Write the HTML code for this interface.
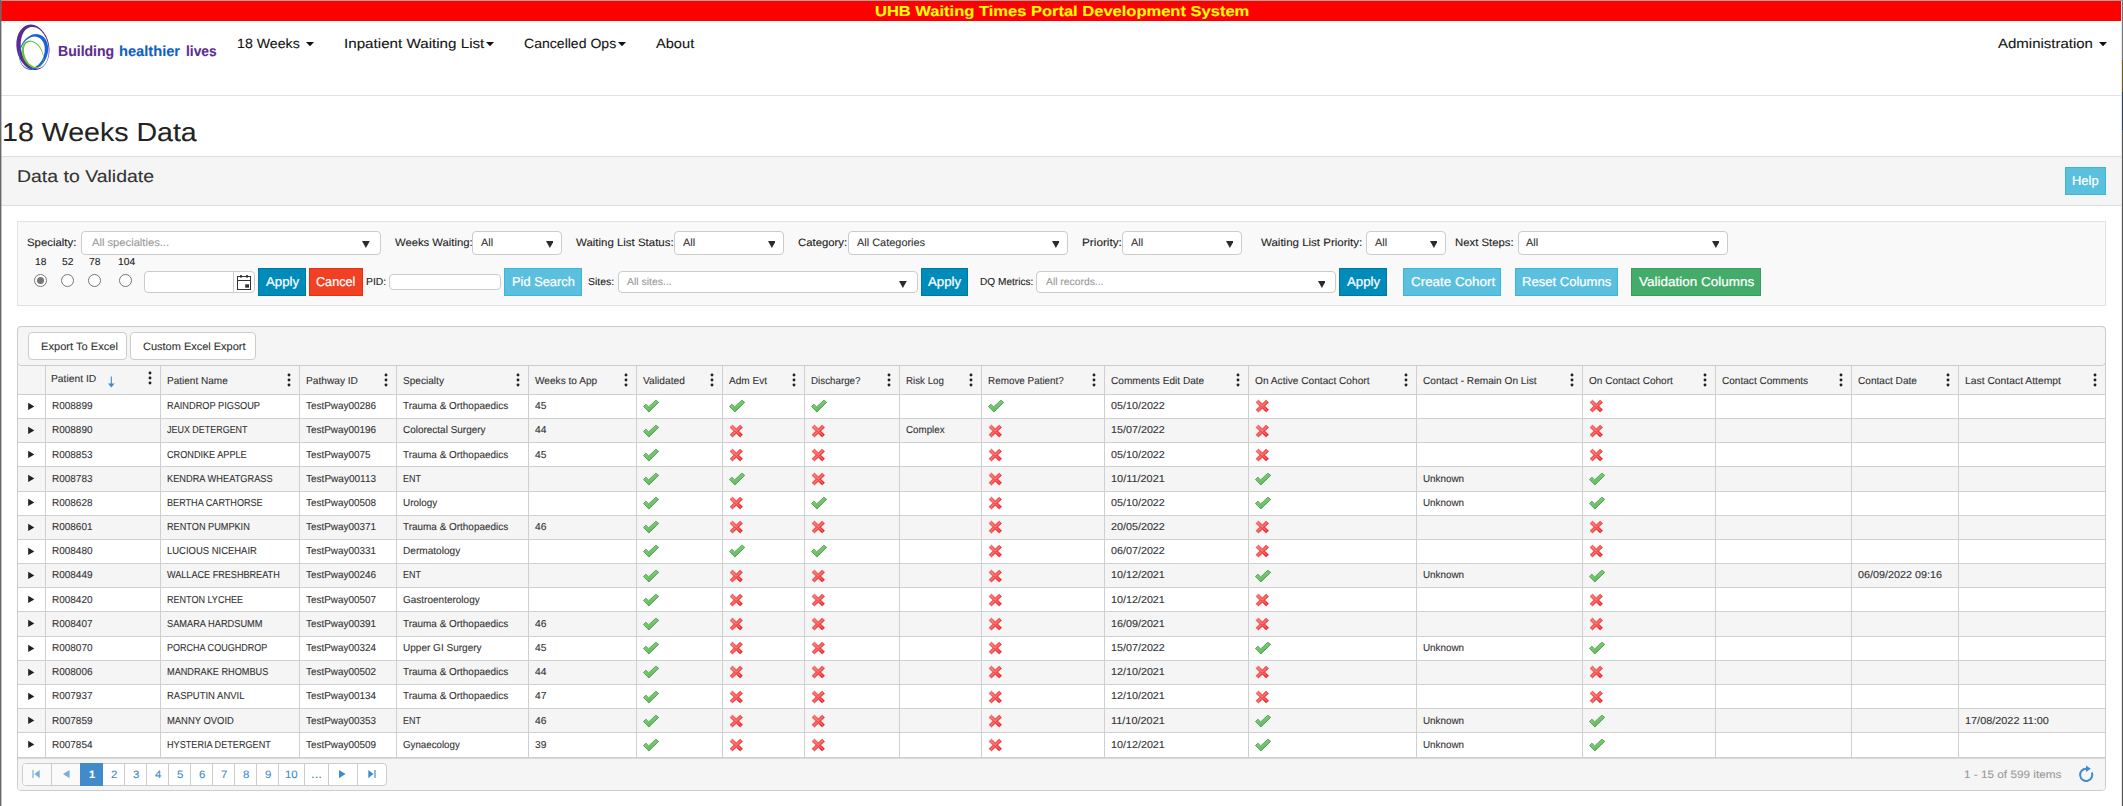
<!DOCTYPE html>
<html><head><meta charset="utf-8"><title>18 Weeks Data</title>
<style>
html,body{margin:0;padding:0;}
body{width:2123px;height:806px;position:relative;overflow:hidden;background:#fff;font-family:"Liberation Sans",sans-serif;}
.b{position:absolute;display:block;}
.t{position:absolute;white-space:pre;line-height:0;transform-origin:0 0;display:block;text-rendering:geometricPrecision;-webkit-text-stroke:0.1px currentColor;}
</style></head><body>
<div class="b" style="left:0px;top:0px;width:2123px;height:806px;background:#fff;"></div>
<div class="b" style="left:1px;top:1px;width:2120px;height:20px;background:#fe0000;"></div>
<span class="t" style="left:874.80px;top:12px;font-size:14.42px;color:#ffff00;font-weight:bold;transform:scaleX(1.1458);">UHB Waiting Times Portal Development System</span>
<div class="b" style="left:1px;top:95px;width:2120px;height:1px;background:#e2e2e2;"></div>
<svg class="b" style="left:10px;top:20px" width="50" height="56" viewBox="10 20 50 56"><path transform="rotate(-11 32.9 47.3)" fill-rule="evenodd" fill="#5a2b90" d="M16.60 47.30a16.30 22.90 0 1 0 32.60 0a16.30 22.90 0 1 0 -32.60 0ZM20.90 48.00a13.70 21.00 0 1 0 27.40 0a13.70 21.00 0 1 0 -27.40 0Z"/><path transform="rotate(20 33.6 52.0)" fill-rule="evenodd" fill="#1762d6" d="M19.60 52.00a14.00 18.40 0 1 0 28.00 0a14.00 18.40 0 1 0 -28.00 0ZM20.50 53.00a12.00 16.40 0 1 0 24.00 0a12.00 16.40 0 1 0 -24.00 0Z"/><path transform="rotate(-25 32.7 54.4)" fill-rule="evenodd" fill="#69c63a" d="M22.50 54.40a10.20 14.40 0 1 0 20.40 0a10.20 14.40 0 1 0 -20.40 0ZM24.70 54.80a8.70 13.30 0 1 0 17.40 0a8.70 13.30 0 1 0 -17.40 0Z"/></svg>
<span class="t" style="left:57.50px;top:52px;font-size:14.6px;color:#5b2c8f;font-weight:bold;transform:scaleX(0.9626);">Building</span>
<span class="t" style="left:119.40px;top:52px;font-size:14.6px;color:#0f5fc6;font-weight:bold;transform:scaleX(1.0041);">healthier</span>
<span class="t" style="left:185.60px;top:52px;font-size:14.6px;color:#5b2c8f;font-weight:bold;transform:scaleX(0.9454);">lives</span>
<span class="t" style="left:236.60px;top:44px;font-size:13.39px;color:#141414;transform:scaleX(1.0591);">18 Weeks</span>
<svg class="b" style="left:306.0px;top:41.8px" width="8.0" height="4.3" viewBox="0 0 8.0 4.3"><path d="M0 0H8.0L4.0 4.3Z" fill="#111"/></svg>
<span class="t" style="left:344.40px;top:44px;font-size:13.39px;color:#141414;transform:scaleX(1.1348);">Inpatient Waiting List</span>
<svg class="b" style="left:485.9px;top:41.8px" width="8.0" height="4.3" viewBox="0 0 8.0 4.3"><path d="M0 0H8.0L4.0 4.3Z" fill="#111"/></svg>
<span class="t" style="left:524.30px;top:44px;font-size:13.39px;color:#141414;transform:scaleX(1.0508);">Cancelled Ops</span>
<svg class="b" style="left:617.6px;top:41.8px" width="8.0" height="4.3" viewBox="0 0 8.0 4.3"><path d="M0 0H8.0L4.0 4.3Z" fill="#111"/></svg>
<span class="t" style="left:655.70px;top:44px;font-size:13.39px;color:#141414;transform:scaleX(1.0926);">About</span>
<span class="t" style="left:1998.00px;top:44px;font-size:13.39px;color:#141414;transform:scaleX(1.1204);">Administration</span>
<svg class="b" style="left:2098.9px;top:41.8px" width="8.0" height="4.3" viewBox="0 0 8.0 4.3"><path d="M0 0H8.0L4.0 4.3Z" fill="#111"/></svg>
<span class="t" style="left:1.60px;top:132px;font-size:26px;color:#222;transform:scaleX(1.0983);">18 Weeks Data</span>
<div class="b" style="left:1px;top:156px;width:2120px;height:1px;background:#ddd;"></div>
<div class="b" style="left:1px;top:157px;width:2120px;height:48px;background:#f5f5f5;"></div>
<div class="b" style="left:1px;top:205px;width:2120px;height:1px;background:#ddd;"></div>
<span class="t" style="left:17.10px;top:177px;font-size:17.0px;color:#333;transform:scaleX(1.1445);">Data to Validate</span>
<div class="b" style="left:2065px;top:167px;width:41px;height:28px;background:#5bc0de;border:1px solid #3db5d8;box-sizing:border-box;"></div>
<span class="t" style="left:2072.40px;top:181px;font-size:12.9px;color:#fff;transform:scaleX(1.0026);-webkit-text-stroke:0.22px #fff;">Help</span>
<div class="b" style="left:17px;top:221px;width:2089px;height:85px;background:#f9f9f9;border:1px solid #e3e3e3;box-sizing:border-box;"></div>
<span class="t" style="left:27.10px;top:243px;font-size:10.7px;color:#222;transform:scaleX(1.0644);">Specialty:</span>
<div class="b" style="left:81px;top:231px;width:300px;height:24px;background:#fff;border:1px solid #ccc;border-radius:4px;box-sizing:border-box;"></div>
<svg class="b" style="left:362.2px;top:241.0px" width="7.8" height="7" viewBox="0 0 7.8 7"><path d="M0 0H7.8L3.9 7Z" fill="#2b2b2b"/></svg>
<span class="t" style="left:91.60px;top:243px;font-size:10.7px;color:#999;transform:scaleX(1.0460);">All specialties...</span>
<span class="t" style="left:394.60px;top:243px;font-size:10.7px;color:#222;transform:scaleX(1.0537);">Weeks Waiting:</span>
<div class="b" style="left:472px;top:231px;width:90px;height:24px;background:#fff;border:1px solid #ccc;border-radius:4px;box-sizing:border-box;"></div>
<svg class="b" style="left:545.5px;top:241.0px" width="7.8" height="7" viewBox="0 0 7.8 7"><path d="M0 0H7.8L3.9 7Z" fill="#2b2b2b"/></svg>
<span class="t" style="left:480.80px;top:243px;font-size:10.7px;color:#333;transform:scaleX(1.0205);">All</span>
<span class="t" style="left:575.90px;top:243px;font-size:10.7px;color:#222;transform:scaleX(1.0715);">Waiting List Status:</span>
<div class="b" style="left:674px;top:231px;width:110px;height:24px;background:#fff;border:1px solid #ccc;border-radius:4px;box-sizing:border-box;"></div>
<svg class="b" style="left:767.5px;top:241.0px" width="7.8" height="7" viewBox="0 0 7.8 7"><path d="M0 0H7.8L3.9 7Z" fill="#2b2b2b"/></svg>
<span class="t" style="left:683.30px;top:243px;font-size:10.7px;color:#333;transform:scaleX(1.0205);">All</span>
<span class="t" style="left:797.90px;top:243px;font-size:10.7px;color:#222;transform:scaleX(1.0600);">Category:</span>
<div class="b" style="left:848px;top:231px;width:220px;height:24px;background:#fff;border:1px solid #ccc;border-radius:4px;box-sizing:border-box;"></div>
<svg class="b" style="left:1051.5px;top:241.0px" width="7.8" height="7" viewBox="0 0 7.8 7"><path d="M0 0H7.8L3.9 7Z" fill="#2b2b2b"/></svg>
<span class="t" style="left:857.00px;top:243px;font-size:10.7px;color:#333;transform:scaleX(1.0235);">All Categories</span>
<span class="t" style="left:1081.50px;top:243px;font-size:10.7px;color:#222;transform:scaleX(1.1006);">Priority:</span>
<div class="b" style="left:1122px;top:231px;width:120px;height:24px;background:#fff;border:1px solid #ccc;border-radius:4px;box-sizing:border-box;"></div>
<svg class="b" style="left:1225.5px;top:241.0px" width="7.8" height="7" viewBox="0 0 7.8 7"><path d="M0 0H7.8L3.9 7Z" fill="#2b2b2b"/></svg>
<span class="t" style="left:1130.90px;top:243px;font-size:10.7px;color:#333;transform:scaleX(1.0205);">All</span>
<span class="t" style="left:1260.90px;top:243px;font-size:10.7px;color:#222;transform:scaleX(1.0766);">Waiting List Priority:</span>
<div class="b" style="left:1366px;top:231px;width:80px;height:24px;background:#fff;border:1px solid #ccc;border-radius:4px;box-sizing:border-box;"></div>
<svg class="b" style="left:1429.5px;top:241.0px" width="7.8" height="7" viewBox="0 0 7.8 7"><path d="M0 0H7.8L3.9 7Z" fill="#2b2b2b"/></svg>
<span class="t" style="left:1375.20px;top:243px;font-size:10.7px;color:#333;transform:scaleX(1.0205);">All</span>
<span class="t" style="left:1454.80px;top:243px;font-size:10.7px;color:#222;transform:scaleX(1.0604);">Next Steps:</span>
<div class="b" style="left:1518px;top:231px;width:210px;height:24px;background:#fff;border:1px solid #ccc;border-radius:4px;box-sizing:border-box;"></div>
<svg class="b" style="left:1711.5px;top:241.0px" width="7.8" height="7" viewBox="0 0 7.8 7"><path d="M0 0H7.8L3.9 7Z" fill="#2b2b2b"/></svg>
<span class="t" style="left:1526.40px;top:243px;font-size:10.7px;color:#333;transform:scaleX(1.0205);">All</span>
<span class="t" style="left:35.30px;top:263px;font-size:10.15px;color:#222;transform:scaleX(1.0140);">18</span>
<div class="b" style="left:34.0px;top:274px;width:13px;height:13px;border:1px solid #767676;border-radius:50%;background:#fff;box-sizing:border-box;"></div>
<span class="t" style="left:62.20px;top:263px;font-size:10.15px;color:#222;transform:scaleX(1.0140);">52</span>
<div class="b" style="left:60.900000000000006px;top:274px;width:13px;height:13px;border:1px solid #767676;border-radius:50%;background:#fff;box-sizing:border-box;"></div>
<span class="t" style="left:89.00px;top:263px;font-size:10.15px;color:#222;transform:scaleX(1.0140);">78</span>
<div class="b" style="left:87.8px;top:274px;width:13px;height:13px;border:1px solid #767676;border-radius:50%;background:#fff;box-sizing:border-box;"></div>
<span class="t" style="left:117.70px;top:263px;font-size:10.15px;color:#222;transform:scaleX(1.0140);">104</span>
<div class="b" style="left:118.9px;top:274px;width:13px;height:13px;border:1px solid #767676;border-radius:50%;background:#fff;box-sizing:border-box;"></div>
<div class="b" style="left:37.0px;top:277px;width:7px;height:7px;background:#767676;border-radius:50%;"></div>
<div class="b" style="left:144px;top:271px;width:111px;height:22px;background:#fff;border:1px solid #ccc;border-radius:4px;box-sizing:border-box;"></div>
<div class="b" style="left:233px;top:272px;width:1px;height:20px;background:#ccc;"></div>
<svg class="b" style="left:236px;top:274px" width="16" height="17" viewBox="0 0 16 17">
<rect x="1.5" y="2.5" width="13" height="13" fill="#fff" stroke="#333" stroke-width="1"/>
<path d="M1.5 6.5H14.5" stroke="#333" stroke-width="1"/>
<rect x="4.1" y="1.0" width="1.7" height="2.7" fill="#333"/><rect x="10.2" y="1.0" width="1.7" height="2.7" fill="#333"/>
<rect x="9.2" y="10.3" width="3.8" height="3.4" fill="#333"/></svg>
<div class="b" style="left:258px;top:268px;width:48px;height:28px;background:#008cba;border:1px solid #0079a1;box-sizing:border-box;"></div>
<span class="t" style="left:265.60px;top:282px;font-size:12.9px;color:#fff;transform:scaleX(1.0288);-webkit-text-stroke:0.22px #fff;">Apply</span>
<div class="b" style="left:309px;top:268px;width:54px;height:28px;background:#f04124;border:1px solid #ea2f10;box-sizing:border-box;"></div>
<span class="t" style="left:316.20px;top:282px;font-size:12.9px;color:#fff;transform:scaleX(0.9787);-webkit-text-stroke:0.22px #fff;">Cancel</span>
<span class="t" style="left:366.40px;top:283px;font-size:10.15px;color:#222;transform:scaleX(1.0254);">PID:</span>
<div class="b" style="left:389px;top:274px;width:112px;height:16px;background:#fff;border:1px solid #ccc;border-radius:4px;box-sizing:border-box;"></div>
<div class="b" style="left:504px;top:268px;width:78px;height:28px;background:#5bc0de;border:1px solid #3db5d8;box-sizing:border-box;"></div>
<span class="t" style="left:511.60px;top:282px;font-size:12.9px;color:#fff;transform:scaleX(0.9968);-webkit-text-stroke:0.22px #fff;">Pid Search</span>
<span class="t" style="left:588.30px;top:283px;font-size:10.15px;color:#222;transform:scaleX(1.0363);">Sites:</span>
<div class="b" style="left:618px;top:271px;width:300px;height:22px;background:#fff;border:1px solid #ccc;border-radius:4px;box-sizing:border-box;"></div>
<svg class="b" style="left:899.2px;top:281.0px" width="7.8" height="7" viewBox="0 0 7.8 7"><path d="M0 0H7.8L3.9 7Z" fill="#2b2b2b"/></svg>
<span class="t" style="left:627.40px;top:283px;font-size:10.15px;color:#999;transform:scaleX(1.0324);">All sites...</span>
<div class="b" style="left:921px;top:268px;width:47px;height:28px;background:#008cba;border:1px solid #0079a1;box-sizing:border-box;"></div>
<span class="t" style="left:927.90px;top:282px;font-size:12.9px;color:#fff;transform:scaleX(1.0288);-webkit-text-stroke:0.22px #fff;">Apply</span>
<span class="t" style="left:979.50px;top:283px;font-size:10.15px;color:#222;transform:scaleX(0.9979);">DQ Metrics:</span>
<div class="b" style="left:1036px;top:271px;width:300px;height:22px;background:#fff;border:1px solid #ccc;border-radius:4px;box-sizing:border-box;"></div>
<svg class="b" style="left:1317.6px;top:281.0px" width="7.8" height="7" viewBox="0 0 7.8 7"><path d="M0 0H7.8L3.9 7Z" fill="#2b2b2b"/></svg>
<span class="t" style="left:1045.90px;top:283px;font-size:10.15px;color:#999;transform:scaleX(1.0209);">All records...</span>
<div class="b" style="left:1339px;top:268px;width:48px;height:28px;background:#008cba;border:1px solid #0079a1;box-sizing:border-box;"></div>
<span class="t" style="left:1346.70px;top:282px;font-size:12.9px;color:#fff;transform:scaleX(1.0288);-webkit-text-stroke:0.22px #fff;">Apply</span>
<div class="b" style="left:1403px;top:268px;width:98px;height:28px;background:#5bc0de;border:1px solid #3db5d8;box-sizing:border-box;"></div>
<span class="t" style="left:1410.60px;top:282px;font-size:12.9px;color:#fff;transform:scaleX(1.0392);-webkit-text-stroke:0.22px #fff;">Create Cohort</span>
<div class="b" style="left:1515px;top:268px;width:103px;height:28px;background:#5bc0de;border:1px solid #3db5d8;box-sizing:border-box;"></div>
<span class="t" style="left:1521.90px;top:282px;font-size:12.9px;color:#fff;transform:scaleX(1.0127);-webkit-text-stroke:0.22px #fff;">Reset Columns</span>
<div class="b" style="left:1631px;top:268px;width:130px;height:28px;background:#43ac6a;border:1px solid #3c9a5f;box-sizing:border-box;"></div>
<span class="t" style="left:1638.50px;top:282px;font-size:12.9px;color:#fff;transform:scaleX(1.0473);-webkit-text-stroke:0.22px #fff;">Validation Columns</span>
<div class="b" style="left:17px;top:326px;width:2089px;height:465px;background:#fff;border:1px solid #ccc;border-radius:4px;box-sizing:border-box;"></div>
<div class="b" style="left:17px;top:326px;width:2089px;height:40px;background:#f5f5f5;border:1px solid #ccc;border-radius:4px;box-sizing:border-box;"></div>
<div class="b" style="left:28px;top:332px;width:99px;height:28px;background:#fff;border:1px solid #ccc;border-radius:4px;box-sizing:border-box;"></div>
<span class="t" style="left:40.80px;top:347px;font-size:10.7px;color:#333;transform:scaleX(1.0385);">Export To Excel</span>
<div class="b" style="left:130px;top:332px;width:126px;height:28px;background:#fff;border:1px solid #ccc;border-radius:4px;box-sizing:border-box;"></div>
<span class="t" style="left:142.80px;top:347px;font-size:10.7px;color:#333;transform:scaleX(1.0274);">Custom Excel Export</span>
<div class="b" style="left:18px;top:366px;width:2087px;height:28px;background:#f5f5f5;"></div>
<div class="b" style="left:18px;top:419px;width:2087px;height:23px;background:#f5f5f5;"></div>
<div class="b" style="left:18px;top:467px;width:2087px;height:24px;background:#f5f5f5;"></div>
<div class="b" style="left:18px;top:516px;width:2087px;height:23px;background:#f5f5f5;"></div>
<div class="b" style="left:18px;top:564px;width:2087px;height:23px;background:#f5f5f5;"></div>
<div class="b" style="left:18px;top:612px;width:2087px;height:24px;background:#f5f5f5;"></div>
<div class="b" style="left:18px;top:661px;width:2087px;height:23px;background:#f5f5f5;"></div>
<div class="b" style="left:18px;top:709px;width:2087px;height:23px;background:#f5f5f5;"></div>
<div class="b" style="left:18px;top:758px;width:2087px;height:32px;background:#f5f5f5;border-radius:0 0 3px 3px;"></div>
<div class="b" style="left:18px;top:394px;width:2087px;height:1px;background:#cfcfcf;"></div>
<div class="b" style="left:18px;top:418px;width:2087px;height:1px;background:#cfcfcf;"></div>
<div class="b" style="left:18px;top:442px;width:2087px;height:1px;background:#cfcfcf;"></div>
<div class="b" style="left:18px;top:466px;width:2087px;height:1px;background:#cfcfcf;"></div>
<div class="b" style="left:18px;top:491px;width:2087px;height:1px;background:#cfcfcf;"></div>
<div class="b" style="left:18px;top:515px;width:2087px;height:1px;background:#cfcfcf;"></div>
<div class="b" style="left:18px;top:539px;width:2087px;height:1px;background:#cfcfcf;"></div>
<div class="b" style="left:18px;top:563px;width:2087px;height:1px;background:#cfcfcf;"></div>
<div class="b" style="left:18px;top:587px;width:2087px;height:1px;background:#cfcfcf;"></div>
<div class="b" style="left:18px;top:611px;width:2087px;height:1px;background:#cfcfcf;"></div>
<div class="b" style="left:18px;top:636px;width:2087px;height:1px;background:#cfcfcf;"></div>
<div class="b" style="left:18px;top:660px;width:2087px;height:1px;background:#cfcfcf;"></div>
<div class="b" style="left:18px;top:684px;width:2087px;height:1px;background:#cfcfcf;"></div>
<div class="b" style="left:18px;top:708px;width:2087px;height:1px;background:#cfcfcf;"></div>
<div class="b" style="left:18px;top:732px;width:2087px;height:1px;background:#cfcfcf;"></div>
<div class="b" style="left:18px;top:757px;width:2087px;height:1px;background:#cfcfcf;"></div>
<div class="b" style="left:18px;top:758px;width:2087px;height:1px;background:#d8d8d8;"></div>
<div class="b" style="left:45px;top:366px;width:1px;height:392px;background:#cfcfcf;"></div>
<div class="b" style="left:160px;top:366px;width:1px;height:392px;background:#cfcfcf;"></div>
<div class="b" style="left:299px;top:366px;width:1px;height:392px;background:#cfcfcf;"></div>
<div class="b" style="left:396px;top:366px;width:1px;height:392px;background:#cfcfcf;"></div>
<div class="b" style="left:528px;top:366px;width:1px;height:392px;background:#cfcfcf;"></div>
<div class="b" style="left:636px;top:366px;width:1px;height:392px;background:#cfcfcf;"></div>
<div class="b" style="left:722px;top:366px;width:1px;height:392px;background:#cfcfcf;"></div>
<div class="b" style="left:804px;top:366px;width:1px;height:392px;background:#cfcfcf;"></div>
<div class="b" style="left:899px;top:366px;width:1px;height:392px;background:#cfcfcf;"></div>
<div class="b" style="left:981px;top:366px;width:1px;height:392px;background:#cfcfcf;"></div>
<div class="b" style="left:1104px;top:366px;width:1px;height:392px;background:#cfcfcf;"></div>
<div class="b" style="left:1248px;top:366px;width:1px;height:392px;background:#cfcfcf;"></div>
<div class="b" style="left:1416px;top:366px;width:1px;height:392px;background:#cfcfcf;"></div>
<div class="b" style="left:1582px;top:366px;width:1px;height:392px;background:#cfcfcf;"></div>
<div class="b" style="left:1715px;top:366px;width:1px;height:392px;background:#cfcfcf;"></div>
<div class="b" style="left:1851px;top:366px;width:1px;height:392px;background:#cfcfcf;"></div>
<div class="b" style="left:1958px;top:366px;width:1px;height:392px;background:#cfcfcf;"></div>
<span class="t" style="left:51.40px;top:380px;font-size:10.15px;color:#333;transform:scaleX(1.0175);">Patient ID</span>
<svg class="b" style="left:148.3px;top:370.7px" width="4" height="14" viewBox="0 0 4 14"><circle cx="2" cy="2" r="1.45" fill="#222"/><circle cx="2" cy="7.05" r="1.45" fill="#222"/><circle cx="2" cy="12.05" r="1.45" fill="#222"/></svg>
<span class="t" style="left:167.00px;top:382px;font-size:10.15px;color:#333;transform:scaleX(0.9901);">Patient Name</span>
<svg class="b" style="left:287.3px;top:372.7px" width="4" height="14" viewBox="0 0 4 14"><circle cx="2" cy="2" r="1.45" fill="#222"/><circle cx="2" cy="7.05" r="1.45" fill="#222"/><circle cx="2" cy="12.05" r="1.45" fill="#222"/></svg>
<span class="t" style="left:306.00px;top:382px;font-size:10.15px;color:#333;transform:scaleX(1.0034);">Pathway ID</span>
<svg class="b" style="left:384.3px;top:372.7px" width="4" height="14" viewBox="0 0 4 14"><circle cx="2" cy="2" r="1.45" fill="#222"/><circle cx="2" cy="7.05" r="1.45" fill="#222"/><circle cx="2" cy="12.05" r="1.45" fill="#222"/></svg>
<span class="t" style="left:403.00px;top:382px;font-size:10.15px;color:#333;transform:scaleX(0.9963);">Specialty</span>
<svg class="b" style="left:516.3px;top:372.7px" width="4" height="14" viewBox="0 0 4 14"><circle cx="2" cy="2" r="1.45" fill="#222"/><circle cx="2" cy="7.05" r="1.45" fill="#222"/><circle cx="2" cy="12.05" r="1.45" fill="#222"/></svg>
<span class="t" style="left:535.00px;top:382px;font-size:10.15px;color:#333;transform:scaleX(0.9987);">Weeks to App</span>
<svg class="b" style="left:624.3px;top:372.7px" width="4" height="14" viewBox="0 0 4 14"><circle cx="2" cy="2" r="1.45" fill="#222"/><circle cx="2" cy="7.05" r="1.45" fill="#222"/><circle cx="2" cy="12.05" r="1.45" fill="#222"/></svg>
<span class="t" style="left:643.00px;top:382px;font-size:10.15px;color:#333;transform:scaleX(1.0110);">Validated</span>
<svg class="b" style="left:710.3px;top:372.7px" width="4" height="14" viewBox="0 0 4 14"><circle cx="2" cy="2" r="1.45" fill="#222"/><circle cx="2" cy="7.05" r="1.45" fill="#222"/><circle cx="2" cy="12.05" r="1.45" fill="#222"/></svg>
<span class="t" style="left:729.00px;top:382px;font-size:10.15px;color:#333;transform:scaleX(0.9973);">Adm Evt</span>
<svg class="b" style="left:792.3px;top:372.7px" width="4" height="14" viewBox="0 0 4 14"><circle cx="2" cy="2" r="1.45" fill="#222"/><circle cx="2" cy="7.05" r="1.45" fill="#222"/><circle cx="2" cy="12.05" r="1.45" fill="#222"/></svg>
<span class="t" style="left:811.00px;top:382px;font-size:10.15px;color:#333;transform:scaleX(0.9663);">Discharge?</span>
<svg class="b" style="left:887.3px;top:372.7px" width="4" height="14" viewBox="0 0 4 14"><circle cx="2" cy="2" r="1.45" fill="#222"/><circle cx="2" cy="7.05" r="1.45" fill="#222"/><circle cx="2" cy="12.05" r="1.45" fill="#222"/></svg>
<span class="t" style="left:906.00px;top:382px;font-size:10.15px;color:#333;transform:scaleX(0.9620);">Risk Log</span>
<svg class="b" style="left:969.3px;top:372.7px" width="4" height="14" viewBox="0 0 4 14"><circle cx="2" cy="2" r="1.45" fill="#222"/><circle cx="2" cy="7.05" r="1.45" fill="#222"/><circle cx="2" cy="12.05" r="1.45" fill="#222"/></svg>
<span class="t" style="left:988.00px;top:382px;font-size:10.15px;color:#333;transform:scaleX(0.9769);">Remove Patient?</span>
<svg class="b" style="left:1092.3px;top:372.7px" width="4" height="14" viewBox="0 0 4 14"><circle cx="2" cy="2" r="1.45" fill="#222"/><circle cx="2" cy="7.05" r="1.45" fill="#222"/><circle cx="2" cy="12.05" r="1.45" fill="#222"/></svg>
<span class="t" style="left:1111.00px;top:382px;font-size:10.15px;color:#333;transform:scaleX(0.9980);">Comments Edit Date</span>
<svg class="b" style="left:1236.3px;top:372.7px" width="4" height="14" viewBox="0 0 4 14"><circle cx="2" cy="2" r="1.45" fill="#222"/><circle cx="2" cy="7.05" r="1.45" fill="#222"/><circle cx="2" cy="12.05" r="1.45" fill="#222"/></svg>
<span class="t" style="left:1255.00px;top:382px;font-size:10.15px;color:#333;transform:scaleX(1.0020);">On Active Contact Cohort</span>
<svg class="b" style="left:1404.3px;top:372.7px" width="4" height="14" viewBox="0 0 4 14"><circle cx="2" cy="2" r="1.45" fill="#222"/><circle cx="2" cy="7.05" r="1.45" fill="#222"/><circle cx="2" cy="12.05" r="1.45" fill="#222"/></svg>
<span class="t" style="left:1423.00px;top:382px;font-size:10.15px;color:#333;transform:scaleX(0.9990);">Contact - Remain On List</span>
<svg class="b" style="left:1570.3px;top:372.7px" width="4" height="14" viewBox="0 0 4 14"><circle cx="2" cy="2" r="1.45" fill="#222"/><circle cx="2" cy="7.05" r="1.45" fill="#222"/><circle cx="2" cy="12.05" r="1.45" fill="#222"/></svg>
<span class="t" style="left:1589.00px;top:382px;font-size:10.15px;color:#333;transform:scaleX(0.9931);">On Contact Cohort</span>
<svg class="b" style="left:1703.3px;top:372.7px" width="4" height="14" viewBox="0 0 4 14"><circle cx="2" cy="2" r="1.45" fill="#222"/><circle cx="2" cy="7.05" r="1.45" fill="#222"/><circle cx="2" cy="12.05" r="1.45" fill="#222"/></svg>
<span class="t" style="left:1722.00px;top:382px;font-size:10.15px;color:#333;transform:scaleX(0.9941);">Contact Comments</span>
<svg class="b" style="left:1839.3px;top:372.7px" width="4" height="14" viewBox="0 0 4 14"><circle cx="2" cy="2" r="1.45" fill="#222"/><circle cx="2" cy="7.05" r="1.45" fill="#222"/><circle cx="2" cy="12.05" r="1.45" fill="#222"/></svg>
<span class="t" style="left:1858.00px;top:382px;font-size:10.15px;color:#333;transform:scaleX(0.9969);">Contact Date</span>
<svg class="b" style="left:1946.3px;top:372.7px" width="4" height="14" viewBox="0 0 4 14"><circle cx="2" cy="2" r="1.45" fill="#222"/><circle cx="2" cy="7.05" r="1.45" fill="#222"/><circle cx="2" cy="12.05" r="1.45" fill="#222"/></svg>
<span class="t" style="left:1965.00px;top:382px;font-size:10.15px;color:#333;transform:scaleX(1.0205);">Last Contact Attempt</span>
<svg class="b" style="left:2093.3px;top:372.7px" width="4" height="14" viewBox="0 0 4 14"><circle cx="2" cy="2" r="1.45" fill="#222"/><circle cx="2" cy="7.05" r="1.45" fill="#222"/><circle cx="2" cy="12.05" r="1.45" fill="#222"/></svg>
<svg class="b" style="left:107px;top:375.6px" width="9" height="12" viewBox="0 0 9 12"><path d="M4.3 0.5V8" stroke="#428bca" stroke-width="1.1" fill="none"/><path d="M1 7.4H7.6L4.3 11.4Z" fill="#428bca"/></svg>
<svg width="0" height="0" style="position:absolute"><defs>
<linearGradient id="gg" x1="0" y1="0" x2="0.6" y2="1"><stop offset="0" stop-color="#93d68c"/><stop offset="1" stop-color="#5db559"/></linearGradient>
<linearGradient id="rg" x1="0" y1="0" x2="1" y2="1"><stop offset="0" stop-color="#ff7474"/><stop offset="0.5" stop-color="#f64e4e"/><stop offset="1" stop-color="#e30c0c"/></linearGradient>
<symbol id="ck" viewBox="0 0 17 13"><path d="M0.45 6.5L2.9 4.2L5.65 6.9L12.9 0.15L15.7 2.4L5.9 12.0Z" fill="url(#gg)" stroke="#3c9a3c" stroke-width="0.8" stroke-linejoin="round"/></symbol>
<g id="cx"><path d="M-6.25 -3.8L-3.8 -6.25L0 -2.45L3.8 -6.25L6.25 -3.8L2.45 0L6.25 3.8L3.8 6.25L0 2.45L-3.8 6.25L-6.25 3.8L-2.45 0Z" fill="url(#rg)" stroke="#ee3030" stroke-width="0.5" stroke-linejoin="round"/><path d="M-4.3 -4.3L4.3 4.3M4.3 -4.3L-4.3 4.3" stroke="#ff9a9a" stroke-opacity="0.55" stroke-width="1.1" stroke-linecap="round" fill="none"/></g>
<symbol id="ar" viewBox="0 0 7 9"><path d="M0.2 0.8L6.3 4.4L0.2 8.0Z" fill="#222"/></symbol>
</defs></svg>
<svg class="b" style="left:28px;top:401.60px" width="7" height="9"><use href="#ar"/></svg>
<span class="t" style="left:51.90px;top:407px;font-size:10.15px;color:#333;transform:scaleX(0.9854);">R008899</span>
<span class="t" style="left:166.90px;top:407px;font-size:10.15px;color:#333;transform:scaleX(0.9101);">RAINDROP PIGSOUP</span>
<span class="t" style="left:305.90px;top:407px;font-size:10.15px;color:#333;transform:scaleX(0.9799);">TestPway00286</span>
<span class="t" style="left:402.90px;top:407px;font-size:10.15px;color:#333;transform:scaleX(0.9816);">Trauma &amp; Orthopaedics</span>
<span class="t" style="left:534.90px;top:407px;font-size:10.15px;color:#333;transform:scaleX(1.0140);">45</span>
<svg class="b" style="left:643px;top:400px" width="17" height="13"><use href="#ck"/></svg>
<svg class="b" style="left:729px;top:400px" width="17" height="13"><use href="#ck"/></svg>
<svg class="b" style="left:811px;top:400px" width="17" height="13"><use href="#ck"/></svg>
<svg class="b" style="left:988px;top:400px" width="17" height="13"><use href="#ck"/></svg>
<span class="t" style="left:1110.90px;top:407px;font-size:10.15px;color:#333;transform:scaleX(1.0623);">05/10/2022</span>
<svg class="b" style="left:1255px;top:398px" width="15" height="16"><use href="#cx" transform="translate(7.3 8.1) scale(1.01 0.96)"/></svg>
<svg class="b" style="left:1589px;top:398px" width="15" height="16"><use href="#cx" transform="translate(7.3 8.1) scale(1.01 0.96)"/></svg>
<svg class="b" style="left:28px;top:425.80px" width="7" height="9"><use href="#ar"/></svg>
<span class="t" style="left:51.90px;top:431px;font-size:10.15px;color:#333;transform:scaleX(0.9854);">R008890</span>
<span class="t" style="left:166.90px;top:431px;font-size:10.15px;color:#333;transform:scaleX(0.8839);">JEUX DETERGENT</span>
<span class="t" style="left:305.90px;top:431px;font-size:10.15px;color:#333;transform:scaleX(0.9799);">TestPway00196</span>
<span class="t" style="left:402.90px;top:431px;font-size:10.15px;color:#333;transform:scaleX(0.9843);">Colorectal Surgery</span>
<span class="t" style="left:534.90px;top:431px;font-size:10.15px;color:#333;transform:scaleX(1.0140);">44</span>
<svg class="b" style="left:643px;top:425px" width="17" height="13"><use href="#ck"/></svg>
<svg class="b" style="left:729px;top:423px" width="15" height="16"><use href="#cx" transform="translate(7.3 8.1) scale(1.01 0.96)"/></svg>
<svg class="b" style="left:811px;top:423px" width="15" height="16"><use href="#cx" transform="translate(7.3 8.1) scale(1.01 0.96)"/></svg>
<span class="t" style="left:905.90px;top:431px;font-size:10.15px;color:#333;transform:scaleX(0.9657);">Complex</span>
<svg class="b" style="left:988px;top:423px" width="15" height="16"><use href="#cx" transform="translate(7.3 8.1) scale(1.01 0.96)"/></svg>
<span class="t" style="left:1110.90px;top:431px;font-size:10.15px;color:#333;transform:scaleX(1.0623);">15/07/2022</span>
<svg class="b" style="left:1255px;top:423px" width="15" height="16"><use href="#cx" transform="translate(7.3 8.1) scale(1.01 0.96)"/></svg>
<svg class="b" style="left:1589px;top:423px" width="15" height="16"><use href="#cx" transform="translate(7.3 8.1) scale(1.01 0.96)"/></svg>
<svg class="b" style="left:28px;top:450.00px" width="7" height="9"><use href="#ar"/></svg>
<span class="t" style="left:51.90px;top:456px;font-size:10.15px;color:#333;transform:scaleX(0.9854);">R008853</span>
<span class="t" style="left:166.90px;top:456px;font-size:10.15px;color:#333;transform:scaleX(0.9020);">CRONDIKE APPLE</span>
<span class="t" style="left:305.90px;top:456px;font-size:10.15px;color:#333;transform:scaleX(0.9783);">TestPway0075</span>
<span class="t" style="left:402.90px;top:456px;font-size:10.15px;color:#333;transform:scaleX(0.9816);">Trauma &amp; Orthopaedics</span>
<span class="t" style="left:534.90px;top:456px;font-size:10.15px;color:#333;transform:scaleX(1.0140);">45</span>
<svg class="b" style="left:643px;top:449px" width="17" height="13"><use href="#ck"/></svg>
<svg class="b" style="left:729px;top:447px" width="15" height="16"><use href="#cx" transform="translate(7.3 8.1) scale(1.01 0.96)"/></svg>
<svg class="b" style="left:811px;top:447px" width="15" height="16"><use href="#cx" transform="translate(7.3 8.1) scale(1.01 0.96)"/></svg>
<svg class="b" style="left:988px;top:447px" width="15" height="16"><use href="#cx" transform="translate(7.3 8.1) scale(1.01 0.96)"/></svg>
<span class="t" style="left:1110.90px;top:456px;font-size:10.15px;color:#333;transform:scaleX(1.0623);">05/10/2022</span>
<svg class="b" style="left:1255px;top:447px" width="15" height="16"><use href="#cx" transform="translate(7.3 8.1) scale(1.01 0.96)"/></svg>
<svg class="b" style="left:1589px;top:447px" width="15" height="16"><use href="#cx" transform="translate(7.3 8.1) scale(1.01 0.96)"/></svg>
<svg class="b" style="left:28px;top:474.20px" width="7" height="9"><use href="#ar"/></svg>
<span class="t" style="left:51.90px;top:480px;font-size:10.15px;color:#333;transform:scaleX(0.9854);">R008783</span>
<span class="t" style="left:166.90px;top:480px;font-size:10.15px;color:#333;transform:scaleX(0.9132);">KENDRA WHEATGRASS</span>
<span class="t" style="left:305.90px;top:480px;font-size:10.15px;color:#333;transform:scaleX(0.9903);">TestPway00113</span>
<span class="t" style="left:402.90px;top:480px;font-size:10.15px;color:#333;transform:scaleX(0.8849);">ENT</span>
<svg class="b" style="left:643px;top:473px" width="17" height="13"><use href="#ck"/></svg>
<svg class="b" style="left:729px;top:473px" width="17" height="13"><use href="#ck"/></svg>
<svg class="b" style="left:811px;top:471px" width="15" height="16"><use href="#cx" transform="translate(7.3 8.1) scale(1.01 0.96)"/></svg>
<svg class="b" style="left:988px;top:471px" width="15" height="16"><use href="#cx" transform="translate(7.3 8.1) scale(1.01 0.96)"/></svg>
<span class="t" style="left:1110.90px;top:480px;font-size:10.15px;color:#333;transform:scaleX(1.0783);">10/11/2021</span>
<svg class="b" style="left:1255px;top:473px" width="17" height="13"><use href="#ck"/></svg>
<span class="t" style="left:1422.90px;top:480px;font-size:10.15px;color:#333;transform:scaleX(0.9738);">Unknown</span>
<svg class="b" style="left:1589px;top:473px" width="17" height="13"><use href="#ck"/></svg>
<svg class="b" style="left:28px;top:498.40px" width="7" height="9"><use href="#ar"/></svg>
<span class="t" style="left:51.90px;top:504px;font-size:10.15px;color:#333;transform:scaleX(0.9854);">R008628</span>
<span class="t" style="left:166.90px;top:504px;font-size:10.15px;color:#333;transform:scaleX(0.8982);">BERTHA CARTHORSE</span>
<span class="t" style="left:305.90px;top:504px;font-size:10.15px;color:#333;transform:scaleX(0.9799);">TestPway00508</span>
<span class="t" style="left:402.90px;top:504px;font-size:10.15px;color:#333;transform:scaleX(0.9789);">Urology</span>
<svg class="b" style="left:643px;top:497px" width="17" height="13"><use href="#ck"/></svg>
<svg class="b" style="left:729px;top:495px" width="15" height="16"><use href="#cx" transform="translate(7.3 8.1) scale(1.01 0.96)"/></svg>
<svg class="b" style="left:811px;top:497px" width="17" height="13"><use href="#ck"/></svg>
<svg class="b" style="left:988px;top:495px" width="15" height="16"><use href="#cx" transform="translate(7.3 8.1) scale(1.01 0.96)"/></svg>
<span class="t" style="left:1110.90px;top:504px;font-size:10.15px;color:#333;transform:scaleX(1.0623);">05/10/2022</span>
<svg class="b" style="left:1255px;top:497px" width="17" height="13"><use href="#ck"/></svg>
<span class="t" style="left:1422.90px;top:504px;font-size:10.15px;color:#333;transform:scaleX(0.9738);">Unknown</span>
<svg class="b" style="left:1589px;top:497px" width="17" height="13"><use href="#ck"/></svg>
<svg class="b" style="left:28px;top:522.60px" width="7" height="9"><use href="#ar"/></svg>
<span class="t" style="left:51.90px;top:528px;font-size:10.15px;color:#333;transform:scaleX(0.9854);">R008601</span>
<span class="t" style="left:166.90px;top:528px;font-size:10.15px;color:#333;transform:scaleX(0.9046);">RENTON PUMPKIN</span>
<span class="t" style="left:305.90px;top:528px;font-size:10.15px;color:#333;transform:scaleX(0.9799);">TestPway00371</span>
<span class="t" style="left:402.90px;top:528px;font-size:10.15px;color:#333;transform:scaleX(0.9816);">Trauma &amp; Orthopaedics</span>
<span class="t" style="left:534.90px;top:528px;font-size:10.15px;color:#333;transform:scaleX(1.0140);">46</span>
<svg class="b" style="left:643px;top:521px" width="17" height="13"><use href="#ck"/></svg>
<svg class="b" style="left:729px;top:519px" width="15" height="16"><use href="#cx" transform="translate(7.3 8.1) scale(1.01 0.96)"/></svg>
<svg class="b" style="left:811px;top:519px" width="15" height="16"><use href="#cx" transform="translate(7.3 8.1) scale(1.01 0.96)"/></svg>
<svg class="b" style="left:988px;top:519px" width="15" height="16"><use href="#cx" transform="translate(7.3 8.1) scale(1.01 0.96)"/></svg>
<span class="t" style="left:1110.90px;top:528px;font-size:10.15px;color:#333;transform:scaleX(1.0623);">20/05/2022</span>
<svg class="b" style="left:1255px;top:519px" width="15" height="16"><use href="#cx" transform="translate(7.3 8.1) scale(1.01 0.96)"/></svg>
<svg class="b" style="left:1589px;top:519px" width="15" height="16"><use href="#cx" transform="translate(7.3 8.1) scale(1.01 0.96)"/></svg>
<svg class="b" style="left:28px;top:546.80px" width="7" height="9"><use href="#ar"/></svg>
<span class="t" style="left:51.90px;top:552px;font-size:10.15px;color:#333;transform:scaleX(0.9854);">R008480</span>
<span class="t" style="left:166.90px;top:552px;font-size:10.15px;color:#333;transform:scaleX(0.9344);">LUCIOUS NICEHAIR</span>
<span class="t" style="left:305.90px;top:552px;font-size:10.15px;color:#333;transform:scaleX(0.9799);">TestPway00331</span>
<span class="t" style="left:402.90px;top:552px;font-size:10.15px;color:#333;transform:scaleX(0.9960);">Dermatology</span>
<svg class="b" style="left:643px;top:545px" width="17" height="13"><use href="#ck"/></svg>
<svg class="b" style="left:729px;top:545px" width="17" height="13"><use href="#ck"/></svg>
<svg class="b" style="left:811px;top:545px" width="17" height="13"><use href="#ck"/></svg>
<svg class="b" style="left:988px;top:543px" width="15" height="16"><use href="#cx" transform="translate(7.3 8.1) scale(1.01 0.96)"/></svg>
<span class="t" style="left:1110.90px;top:552px;font-size:10.15px;color:#333;transform:scaleX(1.0623);">06/07/2022</span>
<svg class="b" style="left:1255px;top:543px" width="15" height="16"><use href="#cx" transform="translate(7.3 8.1) scale(1.01 0.96)"/></svg>
<svg class="b" style="left:1589px;top:543px" width="15" height="16"><use href="#cx" transform="translate(7.3 8.1) scale(1.01 0.96)"/></svg>
<svg class="b" style="left:28px;top:571.00px" width="7" height="9"><use href="#ar"/></svg>
<span class="t" style="left:51.90px;top:576px;font-size:10.15px;color:#333;transform:scaleX(0.9854);">R008449</span>
<span class="t" style="left:166.90px;top:576px;font-size:10.15px;color:#333;transform:scaleX(0.8983);">WALLACE FRESHBREATH</span>
<span class="t" style="left:305.90px;top:576px;font-size:10.15px;color:#333;transform:scaleX(0.9799);">TestPway00246</span>
<span class="t" style="left:402.90px;top:576px;font-size:10.15px;color:#333;transform:scaleX(0.8849);">ENT</span>
<svg class="b" style="left:643px;top:570px" width="17" height="13"><use href="#ck"/></svg>
<svg class="b" style="left:729px;top:568px" width="15" height="16"><use href="#cx" transform="translate(7.3 8.1) scale(1.01 0.96)"/></svg>
<svg class="b" style="left:811px;top:568px" width="15" height="16"><use href="#cx" transform="translate(7.3 8.1) scale(1.01 0.96)"/></svg>
<svg class="b" style="left:988px;top:568px" width="15" height="16"><use href="#cx" transform="translate(7.3 8.1) scale(1.01 0.96)"/></svg>
<span class="t" style="left:1110.90px;top:576px;font-size:10.15px;color:#333;transform:scaleX(1.0623);">10/12/2021</span>
<svg class="b" style="left:1255px;top:570px" width="17" height="13"><use href="#ck"/></svg>
<span class="t" style="left:1422.90px;top:576px;font-size:10.15px;color:#333;transform:scaleX(0.9738);">Unknown</span>
<svg class="b" style="left:1589px;top:570px" width="17" height="13"><use href="#ck"/></svg>
<span class="t" style="left:1857.90px;top:576px;font-size:10.15px;color:#333;transform:scaleX(1.0645);">06/09/2022 09:16</span>
<svg class="b" style="left:28px;top:595.20px" width="7" height="9"><use href="#ar"/></svg>
<span class="t" style="left:51.90px;top:601px;font-size:10.15px;color:#333;transform:scaleX(0.9854);">R008420</span>
<span class="t" style="left:166.90px;top:601px;font-size:10.15px;color:#333;transform:scaleX(0.8924);">RENTON LYCHEE</span>
<span class="t" style="left:305.90px;top:601px;font-size:10.15px;color:#333;transform:scaleX(0.9799);">TestPway00507</span>
<span class="t" style="left:402.90px;top:601px;font-size:10.15px;color:#333;transform:scaleX(0.9876);">Gastroenterology</span>
<svg class="b" style="left:643px;top:594px" width="17" height="13"><use href="#ck"/></svg>
<svg class="b" style="left:729px;top:592px" width="15" height="16"><use href="#cx" transform="translate(7.3 8.1) scale(1.01 0.96)"/></svg>
<svg class="b" style="left:811px;top:592px" width="15" height="16"><use href="#cx" transform="translate(7.3 8.1) scale(1.01 0.96)"/></svg>
<svg class="b" style="left:988px;top:592px" width="15" height="16"><use href="#cx" transform="translate(7.3 8.1) scale(1.01 0.96)"/></svg>
<span class="t" style="left:1110.90px;top:601px;font-size:10.15px;color:#333;transform:scaleX(1.0623);">10/12/2021</span>
<svg class="b" style="left:1255px;top:592px" width="15" height="16"><use href="#cx" transform="translate(7.3 8.1) scale(1.01 0.96)"/></svg>
<svg class="b" style="left:1589px;top:592px" width="15" height="16"><use href="#cx" transform="translate(7.3 8.1) scale(1.01 0.96)"/></svg>
<svg class="b" style="left:28px;top:619.40px" width="7" height="9"><use href="#ar"/></svg>
<span class="t" style="left:51.90px;top:625px;font-size:10.15px;color:#333;transform:scaleX(0.9854);">R008407</span>
<span class="t" style="left:166.90px;top:625px;font-size:10.15px;color:#333;transform:scaleX(0.9120);">SAMARA HARDSUMM</span>
<span class="t" style="left:305.90px;top:625px;font-size:10.15px;color:#333;transform:scaleX(0.9799);">TestPway00391</span>
<span class="t" style="left:402.90px;top:625px;font-size:10.15px;color:#333;transform:scaleX(0.9816);">Trauma &amp; Orthopaedics</span>
<span class="t" style="left:534.90px;top:625px;font-size:10.15px;color:#333;transform:scaleX(1.0140);">46</span>
<svg class="b" style="left:643px;top:618px" width="17" height="13"><use href="#ck"/></svg>
<svg class="b" style="left:729px;top:616px" width="15" height="16"><use href="#cx" transform="translate(7.3 8.1) scale(1.01 0.96)"/></svg>
<svg class="b" style="left:811px;top:616px" width="15" height="16"><use href="#cx" transform="translate(7.3 8.1) scale(1.01 0.96)"/></svg>
<svg class="b" style="left:988px;top:616px" width="15" height="16"><use href="#cx" transform="translate(7.3 8.1) scale(1.01 0.96)"/></svg>
<span class="t" style="left:1110.90px;top:625px;font-size:10.15px;color:#333;transform:scaleX(1.0623);">16/09/2021</span>
<svg class="b" style="left:1255px;top:616px" width="15" height="16"><use href="#cx" transform="translate(7.3 8.1) scale(1.01 0.96)"/></svg>
<svg class="b" style="left:1589px;top:616px" width="15" height="16"><use href="#cx" transform="translate(7.3 8.1) scale(1.01 0.96)"/></svg>
<svg class="b" style="left:28px;top:643.60px" width="7" height="9"><use href="#ar"/></svg>
<span class="t" style="left:51.90px;top:649px;font-size:10.15px;color:#333;transform:scaleX(0.9854);">R008070</span>
<span class="t" style="left:166.90px;top:649px;font-size:10.15px;color:#333;transform:scaleX(0.8912);">PORCHA COUGHDROP</span>
<span class="t" style="left:305.90px;top:649px;font-size:10.15px;color:#333;transform:scaleX(0.9799);">TestPway00324</span>
<span class="t" style="left:402.90px;top:649px;font-size:10.15px;color:#333;transform:scaleX(0.9900);">Upper GI Surgery</span>
<span class="t" style="left:534.90px;top:649px;font-size:10.15px;color:#333;transform:scaleX(1.0140);">45</span>
<svg class="b" style="left:643px;top:642px" width="17" height="13"><use href="#ck"/></svg>
<svg class="b" style="left:729px;top:640px" width="15" height="16"><use href="#cx" transform="translate(7.3 8.1) scale(1.01 0.96)"/></svg>
<svg class="b" style="left:811px;top:640px" width="15" height="16"><use href="#cx" transform="translate(7.3 8.1) scale(1.01 0.96)"/></svg>
<svg class="b" style="left:988px;top:640px" width="15" height="16"><use href="#cx" transform="translate(7.3 8.1) scale(1.01 0.96)"/></svg>
<span class="t" style="left:1110.90px;top:649px;font-size:10.15px;color:#333;transform:scaleX(1.0623);">15/07/2022</span>
<svg class="b" style="left:1255px;top:642px" width="17" height="13"><use href="#ck"/></svg>
<span class="t" style="left:1422.90px;top:649px;font-size:10.15px;color:#333;transform:scaleX(0.9738);">Unknown</span>
<svg class="b" style="left:1589px;top:642px" width="17" height="13"><use href="#ck"/></svg>
<svg class="b" style="left:28px;top:667.80px" width="7" height="9"><use href="#ar"/></svg>
<span class="t" style="left:51.90px;top:673px;font-size:10.15px;color:#333;transform:scaleX(0.9854);">R008006</span>
<span class="t" style="left:166.90px;top:673px;font-size:10.15px;color:#333;transform:scaleX(0.9046);">MANDRAKE RHOMBUS</span>
<span class="t" style="left:305.90px;top:673px;font-size:10.15px;color:#333;transform:scaleX(0.9799);">TestPway00502</span>
<span class="t" style="left:402.90px;top:673px;font-size:10.15px;color:#333;transform:scaleX(0.9816);">Trauma &amp; Orthopaedics</span>
<span class="t" style="left:534.90px;top:673px;font-size:10.15px;color:#333;transform:scaleX(1.0140);">44</span>
<svg class="b" style="left:643px;top:666px" width="17" height="13"><use href="#ck"/></svg>
<svg class="b" style="left:729px;top:664px" width="15" height="16"><use href="#cx" transform="translate(7.3 8.1) scale(1.01 0.96)"/></svg>
<svg class="b" style="left:811px;top:664px" width="15" height="16"><use href="#cx" transform="translate(7.3 8.1) scale(1.01 0.96)"/></svg>
<svg class="b" style="left:988px;top:664px" width="15" height="16"><use href="#cx" transform="translate(7.3 8.1) scale(1.01 0.96)"/></svg>
<span class="t" style="left:1110.90px;top:673px;font-size:10.15px;color:#333;transform:scaleX(1.0623);">12/10/2021</span>
<svg class="b" style="left:1255px;top:664px" width="15" height="16"><use href="#cx" transform="translate(7.3 8.1) scale(1.01 0.96)"/></svg>
<svg class="b" style="left:1589px;top:664px" width="15" height="16"><use href="#cx" transform="translate(7.3 8.1) scale(1.01 0.96)"/></svg>
<svg class="b" style="left:28px;top:692.00px" width="7" height="9"><use href="#ar"/></svg>
<span class="t" style="left:51.90px;top:697px;font-size:10.15px;color:#333;transform:scaleX(0.9854);">R007937</span>
<span class="t" style="left:166.90px;top:697px;font-size:10.15px;color:#333;transform:scaleX(0.9366);">RASPUTIN ANVIL</span>
<span class="t" style="left:305.90px;top:697px;font-size:10.15px;color:#333;transform:scaleX(0.9799);">TestPway00134</span>
<span class="t" style="left:402.90px;top:697px;font-size:10.15px;color:#333;transform:scaleX(0.9816);">Trauma &amp; Orthopaedics</span>
<span class="t" style="left:534.90px;top:697px;font-size:10.15px;color:#333;transform:scaleX(1.0140);">47</span>
<svg class="b" style="left:643px;top:691px" width="17" height="13"><use href="#ck"/></svg>
<svg class="b" style="left:729px;top:689px" width="15" height="16"><use href="#cx" transform="translate(7.3 8.1) scale(1.01 0.96)"/></svg>
<svg class="b" style="left:811px;top:689px" width="15" height="16"><use href="#cx" transform="translate(7.3 8.1) scale(1.01 0.96)"/></svg>
<svg class="b" style="left:988px;top:689px" width="15" height="16"><use href="#cx" transform="translate(7.3 8.1) scale(1.01 0.96)"/></svg>
<span class="t" style="left:1110.90px;top:697px;font-size:10.15px;color:#333;transform:scaleX(1.0623);">12/10/2021</span>
<svg class="b" style="left:1255px;top:689px" width="15" height="16"><use href="#cx" transform="translate(7.3 8.1) scale(1.01 0.96)"/></svg>
<svg class="b" style="left:1589px;top:689px" width="15" height="16"><use href="#cx" transform="translate(7.3 8.1) scale(1.01 0.96)"/></svg>
<svg class="b" style="left:28px;top:716.20px" width="7" height="9"><use href="#ar"/></svg>
<span class="t" style="left:51.90px;top:722px;font-size:10.15px;color:#333;transform:scaleX(0.9854);">R007859</span>
<span class="t" style="left:166.90px;top:722px;font-size:10.15px;color:#333;transform:scaleX(0.9300);">MANNY OVOID</span>
<span class="t" style="left:305.90px;top:722px;font-size:10.15px;color:#333;transform:scaleX(0.9799);">TestPway00353</span>
<span class="t" style="left:402.90px;top:722px;font-size:10.15px;color:#333;transform:scaleX(0.8849);">ENT</span>
<span class="t" style="left:534.90px;top:722px;font-size:10.15px;color:#333;transform:scaleX(1.0140);">46</span>
<svg class="b" style="left:643px;top:715px" width="17" height="13"><use href="#ck"/></svg>
<svg class="b" style="left:729px;top:713px" width="15" height="16"><use href="#cx" transform="translate(7.3 8.1) scale(1.01 0.96)"/></svg>
<svg class="b" style="left:811px;top:713px" width="15" height="16"><use href="#cx" transform="translate(7.3 8.1) scale(1.01 0.96)"/></svg>
<svg class="b" style="left:988px;top:713px" width="15" height="16"><use href="#cx" transform="translate(7.3 8.1) scale(1.01 0.96)"/></svg>
<span class="t" style="left:1110.90px;top:722px;font-size:10.15px;color:#333;transform:scaleX(1.0783);">11/10/2021</span>
<svg class="b" style="left:1255px;top:715px" width="17" height="13"><use href="#ck"/></svg>
<span class="t" style="left:1422.90px;top:722px;font-size:10.15px;color:#333;transform:scaleX(0.9738);">Unknown</span>
<svg class="b" style="left:1589px;top:715px" width="17" height="13"><use href="#ck"/></svg>
<span class="t" style="left:1964.90px;top:722px;font-size:10.15px;color:#333;transform:scaleX(1.0747);">17/08/2022 11:00</span>
<svg class="b" style="left:28px;top:740.40px" width="7" height="9"><use href="#ar"/></svg>
<span class="t" style="left:51.90px;top:746px;font-size:10.15px;color:#333;transform:scaleX(0.9854);">R007854</span>
<span class="t" style="left:166.90px;top:746px;font-size:10.15px;color:#333;transform:scaleX(0.9004);">HYSTERIA DETERGENT</span>
<span class="t" style="left:305.90px;top:746px;font-size:10.15px;color:#333;transform:scaleX(0.9799);">TestPway00509</span>
<span class="t" style="left:402.90px;top:746px;font-size:10.15px;color:#333;transform:scaleX(0.9608);">Gynaecology</span>
<span class="t" style="left:534.90px;top:746px;font-size:10.15px;color:#333;transform:scaleX(1.0140);">39</span>
<svg class="b" style="left:643px;top:739px" width="17" height="13"><use href="#ck"/></svg>
<svg class="b" style="left:729px;top:737px" width="15" height="16"><use href="#cx" transform="translate(7.3 8.1) scale(1.01 0.96)"/></svg>
<svg class="b" style="left:811px;top:737px" width="15" height="16"><use href="#cx" transform="translate(7.3 8.1) scale(1.01 0.96)"/></svg>
<svg class="b" style="left:988px;top:737px" width="15" height="16"><use href="#cx" transform="translate(7.3 8.1) scale(1.01 0.96)"/></svg>
<span class="t" style="left:1110.90px;top:746px;font-size:10.15px;color:#333;transform:scaleX(1.0623);">10/12/2021</span>
<svg class="b" style="left:1255px;top:739px" width="17" height="13"><use href="#ck"/></svg>
<span class="t" style="left:1422.90px;top:746px;font-size:10.15px;color:#333;transform:scaleX(0.9738);">Unknown</span>
<svg class="b" style="left:1589px;top:739px" width="17" height="13"><use href="#ck"/></svg>
<div class="b" style="left:22px;top:763px;width:365px;height:23px;background:#fff;border:1px solid #ccc;border-radius:4px;box-sizing:border-box;"></div>
<div class="b" style="left:23px;top:764px;width:57px;height:21px;background:#fafafa;border-radius:3px 0 0 3px;"></div>
<div class="b" style="left:80px;top:763px;width:23px;height:23px;background:#428bca;"></div>
<div class="b" style="left:51px;top:764px;width:1px;height:21px;background:#ccc;"></div>
<div class="b" style="left:124px;top:764px;width:1px;height:21px;background:#ccc;"></div>
<div class="b" style="left:146px;top:764px;width:1px;height:21px;background:#ccc;"></div>
<div class="b" style="left:168px;top:764px;width:1px;height:21px;background:#ccc;"></div>
<div class="b" style="left:190px;top:764px;width:1px;height:21px;background:#ccc;"></div>
<div class="b" style="left:212px;top:764px;width:1px;height:21px;background:#ccc;"></div>
<div class="b" style="left:234px;top:764px;width:1px;height:21px;background:#ccc;"></div>
<div class="b" style="left:256px;top:764px;width:1px;height:21px;background:#ccc;"></div>
<div class="b" style="left:278px;top:764px;width:1px;height:21px;background:#ccc;"></div>
<div class="b" style="left:304px;top:764px;width:1px;height:21px;background:#ccc;"></div>
<div class="b" style="left:328px;top:764px;width:1px;height:21px;background:#ccc;"></div>
<div class="b" style="left:357px;top:764px;width:1px;height:21px;background:#ccc;"></div>
<span class="t" style="left:88.60px;top:775px;font-size:10.7px;color:#fff;font-weight:bold;transform:scaleX(1.0419);">1</span>
<span class="t" style="left:110.60px;top:775px;font-size:10.7px;color:#428bca;transform:scaleX(1.0688);">2</span>
<span class="t" style="left:132.60px;top:775px;font-size:10.7px;color:#428bca;transform:scaleX(1.0688);">3</span>
<span class="t" style="left:154.60px;top:775px;font-size:10.7px;color:#428bca;transform:scaleX(1.0688);">4</span>
<span class="t" style="left:176.60px;top:775px;font-size:10.7px;color:#428bca;transform:scaleX(1.0688);">5</span>
<span class="t" style="left:198.60px;top:775px;font-size:10.7px;color:#428bca;transform:scaleX(1.0688);">6</span>
<span class="t" style="left:220.60px;top:775px;font-size:10.7px;color:#428bca;transform:scaleX(1.0688);">7</span>
<span class="t" style="left:242.60px;top:775px;font-size:10.7px;color:#428bca;transform:scaleX(1.0688);">8</span>
<span class="t" style="left:264.60px;top:775px;font-size:10.7px;color:#428bca;transform:scaleX(1.0688);">9</span>
<span class="t" style="left:285.20px;top:775px;font-size:10.7px;color:#428bca;transform:scaleX(1.0688);">10</span>
<span class="t" style="left:311.30px;top:775px;font-size:10.7px;color:#428bca;transform:scaleX(1.2245);">...</span>
<svg class="b" style="left:32.4px;top:770px" width="8" height="8.2" viewBox="0 0 8 8.2"><rect x="0.4" y="0" width="1.15" height="8.2" fill="#79addb"/><path d="M7.7 0V8.2L2.5 4.1Z" fill="#79addb"/></svg>
<svg class="b" style="left:63px;top:770px" width="6.6" height="8.2" viewBox="0 0 6.6 8.2"><path d="M6.6 0V8.2L0 4.1Z" fill="#79addb"/></svg>
<svg class="b" style="left:339.3px;top:770px" width="6.6" height="8.2" viewBox="0 0 6.6 8.2"><path d="M0 0V8.2L6.6 4.1Z" fill="#428bca"/></svg>
<svg class="b" style="left:367.6px;top:770px" width="8" height="8.2" viewBox="0 0 8 8.2"><rect x="6.45" y="0" width="1.15" height="8.2" fill="#428bca"/><path d="M0.3 0V8.2L5.5 4.1Z" fill="#428bca"/></svg>
<span class="t" style="left:1963.60px;top:775px;font-size:10.7px;color:#999;transform:scaleX(1.0999);">1 - 15 of 599 items</span>
<svg class="b" style="left:2078px;top:765px" width="17" height="18" viewBox="0 0 17 18"><path d="M8.2 3.7A6.1 6.1 0 1 0 13.86 7.5" fill="none" stroke="#428bca" stroke-width="2"/><path d="M8.0 0.6V7.0L12.9 3.8Z" fill="#428bca"/></svg>
<div class="b" style="left:0px;top:0px;width:2123px;height:1px;background:#a2a2a2;"></div>
<div class="b" style="left:0px;top:0px;width:1px;height:806px;background:#686868;"></div>
<div class="b" style="left:1px;top:1px;width:1px;height:805px;background:rgba(120,120,120,0.45);"></div>
<div class="b" style="left:2122px;top:0px;width:1px;height:806px;background:linear-gradient(#777 0,#777 60px,#6b5a1e 60px,#6b5a1e 92px,#2a3f5f 92px,#2a3f5f 130px,#555 130px);"></div>
<div class="b" style="left:2121px;top:1px;width:1px;height:805px;background:rgba(120,120,120,0.18);"></div>
</body></html>
